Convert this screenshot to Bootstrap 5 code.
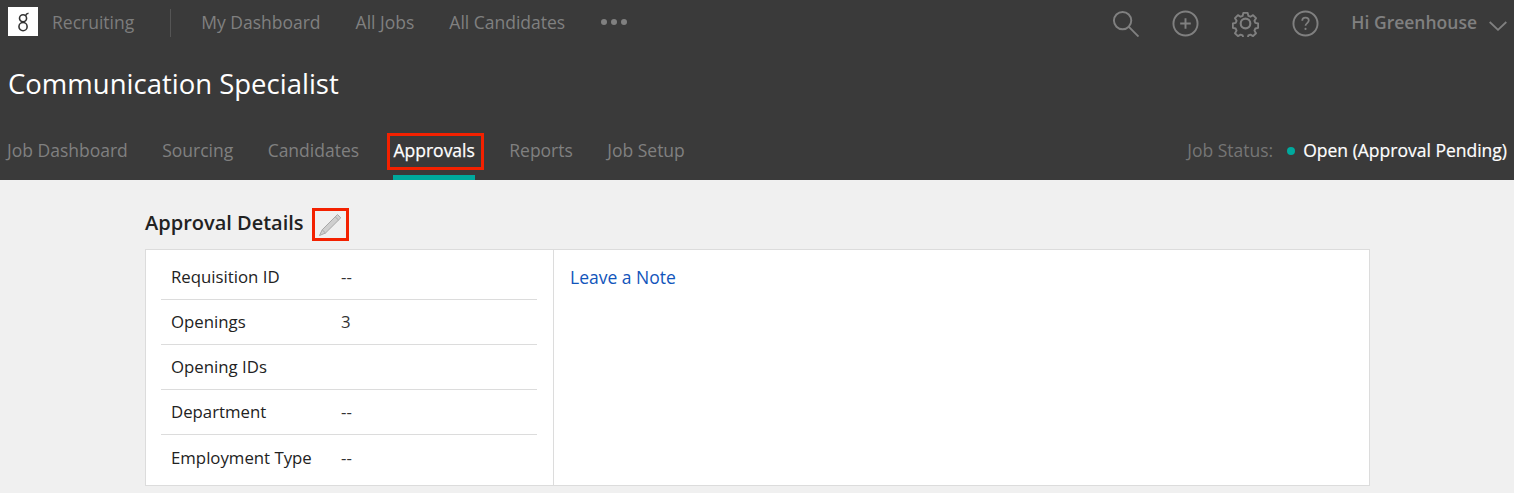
<!DOCTYPE html>
<html lang="en">
<head>
<meta charset="utf-8">
<title>Approvals</title>
<link href="https://cdn.jsdelivr.net/npm/bootstrap@5.3.0/dist/css/bootstrap.min.css" rel="stylesheet">
<style>
html, body { height: 100%; overflow: hidden; }
body { background: #f0f0f0; font-family: "Open Sans", "Noto Sans", sans-serif; font-size: 17.5px; color: #222; }
.hdr { background: #3a3a3a; height: 180px; color: #808080; }
.toprow { height: 46px; padding: 0 7px 0 8px; }
.logo-box { width: 30px; height: 29px; background: #fff; margin-top: -3px; }
.prod { margin-left: 14px; color: #7d7d7d; margin-top: -2px; }
.sep { width: 1px; height: 28px; background: #555; margin: 0 30px 0 36px; }
.toplink { color: #808080; text-decoration: none; margin-right: 35px; margin-top: -2px; }
.dots { display: flex; gap: 4px; margin-top: -3px; margin-left: 1px; }
.dots i { width: 6px; height: 6px; border-radius: 50%; background: #808080; display: block; }
.icons { gap: 33px; margin-right: 32px; }
.usr { font-weight: 600; color: #808080; margin-right: 12px; margin-top: -1px; }
.chev { margin-top: 5px; }
.jobttl { font-size: 27.5px; line-height: 36px; color: #fff; font-weight: 400; margin: 0; padding: 20px 0 0 8px; height: 78px; }
.tabrow { height: 56px; padding: 0 7px 0 7px; }
.tabset { gap: 34.4px; }
.tabitem { color: #808080; text-decoration: none; height: 56px; line-height: 53px; display: block; position: relative; }
.tabitem.on { color: #fff; border-bottom: 5px solid #00a99d; -webkit-text-stroke: .25px #fff; }
.redbox { position: absolute; border: 3px solid #f32100; pointer-events: none; }
.rb-tab { left: -6px; right: -9px; top: 9px; height: 37px; }
.status-lbl { color: #757575; }
.status-dot { width: 8px; height: 8px; border-radius: 50%; background: #00a99d; margin: 0 8px 0 14px; }
.status-val { color: #fff; -webkit-text-stroke: .2px #fff; }
.main { padding: 28px 144px 0 145px; }
.sectttl { font-size: 20px; font-weight: 600; color: #222; margin: 0; line-height: 26px; padding-bottom: 4px; }
.editwrap { position: relative; width: 37px; height: 33px; margin-left: 8px; display: flex; align-items: center; justify-content: center; }
.rb-edit { inset: 0; }
.panel-box { background: #fff; border: 1px solid #dcdcdc; height: 237px; margin-top: 8px; }
.leftcol { width: 408px; border-right: 1px solid #dcdcdc; padding: 5px 16px 0 15px; flex: none; }
.detrow { height: 45px; display: flex; align-items: center; padding-left: 10px; border-bottom: 1px solid #dcdcdc; color: #222; font-size: 16.8px; }
.detrow:last-child { border-bottom: 0; }
.detkey { width: 170px; }
.detval { color: #333; }
.notelink { color: #1155bb; text-decoration: none; display: block; padding: 15px 0 0 16px; line-height: 24px; }
</style>
</head>
<body>
<div class="hdr">
  <div class="d-flex align-items-center toprow">
    <div class="logo-box d-flex align-items-center justify-content-center">
      <svg width="13" height="22" viewBox="0 0 14 22" fill="none" stroke="#333" stroke-width="1.7"><circle cx="6.5" cy="7" r="3.8"/><circle cx="6.5" cy="16" r="4.4"/><path d="M9.2 4.2 C9.6 2.6 10.6 1.8 12.4 1.6"/></svg>
    </div>
    <span class="prod">Recruiting</span>
    <span class="sep"></span>
    <a class="toplink" href="#">My Dashboard</a>
    <a class="toplink" href="#">All Jobs</a>
    <a class="toplink" href="#">All Candidates</a>
    <span class="dots"><i></i><i></i><i></i></span>
    <div class="ms-auto d-flex align-items-center">
      <div class="d-flex align-items-center icons">
        <svg width="27" height="27" viewBox="0 0 28 28" fill="none" stroke="#808080" stroke-width="2"><circle cx="11" cy="11" r="9"/><path d="M17.5 17.5 L27.5 27.5"/></svg>
        <svg width="27" height="27" viewBox="0 0 28 28" fill="none" stroke="#808080" stroke-width="2"><circle cx="14" cy="14" r="12.5"/><path d="M14 8.5v11M8.5 14h11"/></svg>
        <svg width="27" height="27" viewBox="0 0 28 28" fill="none" stroke="#808080" stroke-width="2.2" stroke-linejoin="round"><circle cx="14" cy="14" r="5"/><path d="M11.5 1.8h5l.8 3.4 2.4 1 3-1.8 3.4 3.5-1.8 3 1 2.3 3.3.8v5l-3.3.8-1 2.4 1.8 3-3.4 3.4-3-1.8-2.4 1-.8 3.3h-5l-.8-3.3-2.4-1-3 1.8-3.4-3.4 1.8-3-1-2.4-3.3-.8v-5l3.3-.8 1-2.3-1.8-3 3.4-3.5 3 1.8 2.4-1z" transform="translate(1.4 1.4) scale(.9)"/></svg>
        <svg width="27" height="27" viewBox="0 0 28 28" fill="none" stroke="#808080" stroke-width="2"><circle cx="14" cy="14" r="12.5"/><path d="M10.6 11.2c0-2 1.5-3.2 3.4-3.2s3.4 1.2 3.4 3c0 2.6-3.4 2.6-3.4 5.4" stroke-width="1.8"/><circle cx="14" cy="19.6" r="1.1" fill="#808080" stroke="none"/></svg>
      </div>
      <span class="usr">Hi Greenhouse</span>
      <svg class="chev" width="18" height="10" viewBox="0 0 18 10" fill="none" stroke="#808080" stroke-width="1.8"><path d="M.7 1 L9 8.8 L17.3 1"/></svg>
    </div>
  </div>
  <h1 class="jobttl">Communication Specialist</h1>
  <div class="d-flex justify-content-between tabrow">
    <div class="d-flex tabset">
      <a class="tabitem" href="#">Job Dashboard</a>
      <a class="tabitem" href="#">Sourcing</a>
      <a class="tabitem" href="#">Candidates</a>
      <a class="tabitem on" href="#">Approvals<span class="redbox rb-tab"></span></a>
      <a class="tabitem" href="#">Reports</a>
      <a class="tabitem" href="#">Job Setup</a>
    </div>
    <div class="d-flex align-items-center" style="height:53px">
      <span class="status-lbl">Job Status:</span>
      <span class="status-dot"></span>
      <span class="status-val">Open (Approval Pending)</span>
    </div>
  </div>
</div>
<div class="main">
  <div class="d-flex align-items-center">
    <h2 class="sectttl">Approval Details</h2>
    <div class="editwrap">
      <span class="redbox rb-edit"></span>
      <svg width="24" height="24" viewBox="0 0 24 24" fill="#cfcfcf" stroke="#a8a8a8" stroke-width="1"><path d="M19.5 1.5 L22.8 4.8 L7.5 20 L1.5 22.5 L4.2 16.8 Z"/><path d="M17.2 3.8 L20.5 7 M4.2 16.8 L7.5 20" fill="none"/></svg>
    </div>
  </div>
  <div class="panel-box d-flex">
    <div class="leftcol">
      <div class="detrow"><span class="detkey">Requisition ID</span><span class="detval">--</span></div>
      <div class="detrow"><span class="detkey">Openings</span><span class="detval">3</span></div>
      <div class="detrow"><span class="detkey">Opening IDs</span><span class="detval"></span></div>
      <div class="detrow"><span class="detkey">Department</span><span class="detval">--</span></div>
      <div class="detrow"><span class="detkey">Employment Type</span><span class="detval">--</span></div>
    </div>
    <div class="flex-grow-1"><a class="notelink" href="#">Leave a Note</a></div>
  </div>
</div>
<script src="https://cdn.jsdelivr.net/npm/bootstrap@5.3.0/dist/js/bootstrap.bundle.min.js"></script>
</body>
</html>
